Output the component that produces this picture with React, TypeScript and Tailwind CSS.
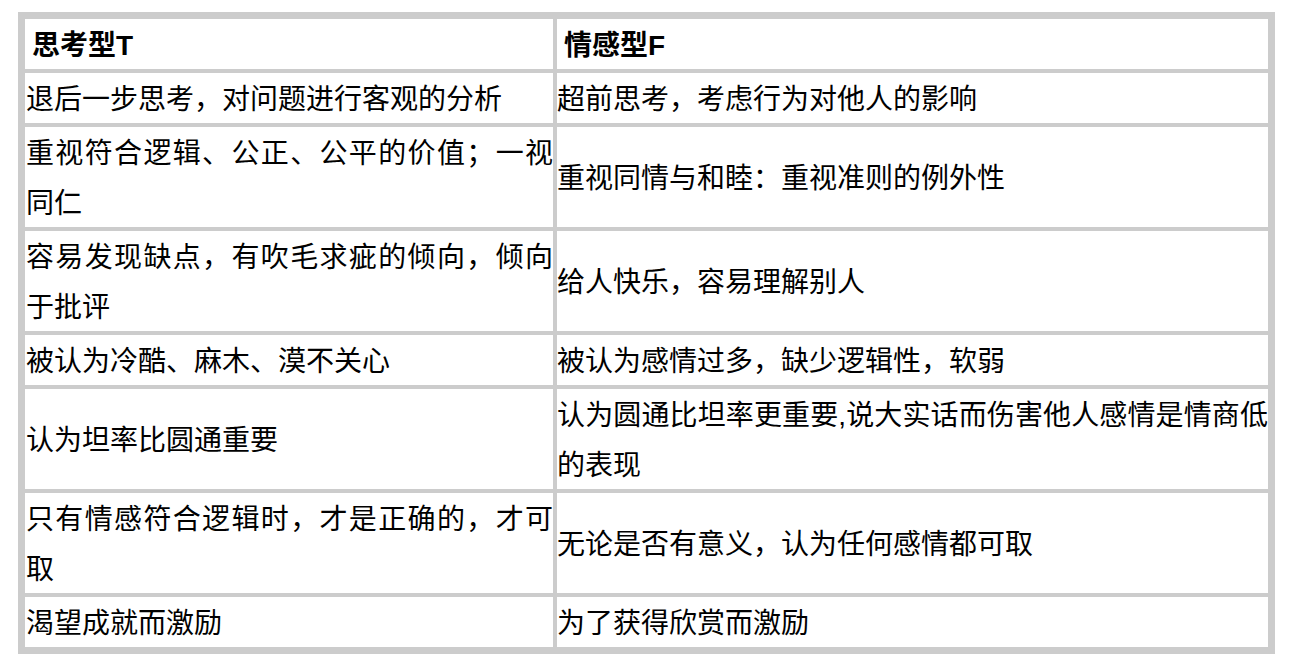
import React from "react";

const rows: [string, string][] = [
  ["退后一步思考，对问题进行客观的分析", "超前思考，考虑行为对他人的影响"],
  ["重视符合逻辑、公正、公平的价值；一视同仁", "重视同情与和睦：重视准则的例外性"],
  ["容易发现缺点，有吹毛求疵的倾向，倾向于批评", "给人快乐，容易理解别人"],
  ["被认为冷酷、麻木、漠不关心", "被认为感情过多，缺少逻辑性，软弱"],
  ["认为坦率比圆通重要", "认为圆通比坦率更重要,说大实话而伤害他人感情是情商低的表现"],
  ["只有情感符合逻辑时，才是正确的，才可取", "无论是否有意义，认为任何感情都可取"],
  ["渴望成就而激励", "为了获得欣赏而激励"],
];

export default function App() {
  return (
    <div
      className="min-h-[672px] w-full bg-white pt-[12px] pl-[18px] text-black"
      style={{ fontFamily: '"Liberation Sans", "Noto Sans CJK SC", sans-serif' }}
    >
      <div className="grid w-[1257px] grid-cols-[528px_711px] gap-[4px] bg-[#cccccc] p-[7px]">
        <div className="flex min-h-[50px] items-center bg-white pl-[7px] text-[28px] font-bold leading-[50px]">
          <span className="translate-y-[2px]">思考型T</span>
        </div>
        <div className="flex min-h-[50px] items-center bg-white pl-[7px] text-[28px] font-bold leading-[50px]">
          <span className="translate-y-[2px]">情感型F</span>
        </div>
        {rows.map(([a, b], i) => (
          <React.Fragment key={i}>
            <div className="flex min-h-[50px] items-center bg-white pl-px text-[28px] leading-[50px]">
              <span className="w-full translate-y-[2px] text-justify">{a}</span>
            </div>
            <div className="flex min-h-[50px] items-center bg-white pl-0 text-[28px] leading-[50px]">
              <span className="w-full translate-y-[2px] text-justify">{b}</span>
            </div>
          </React.Fragment>
        ))}
      </div>
    </div>
  );
}
